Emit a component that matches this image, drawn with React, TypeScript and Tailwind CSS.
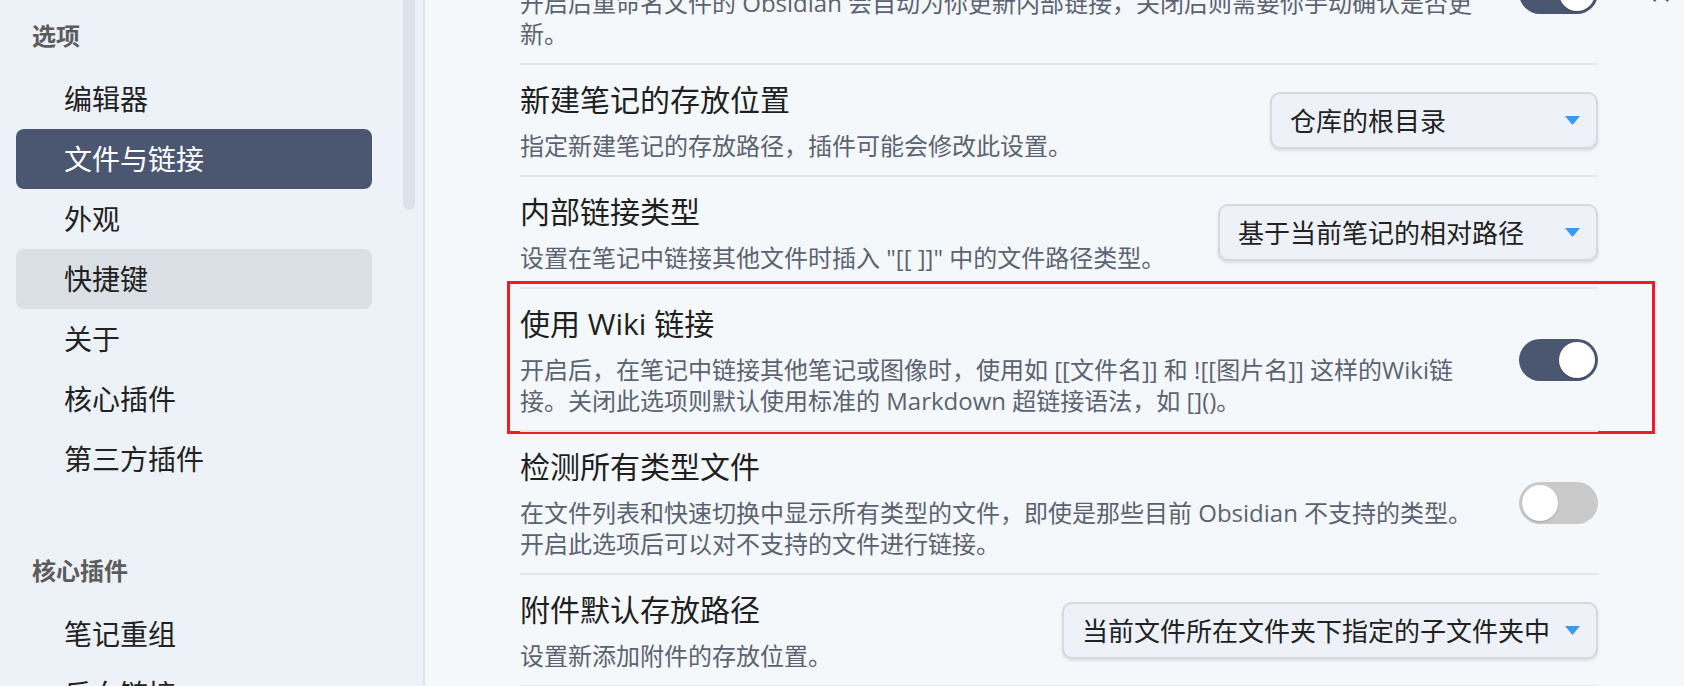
import React from "react";
import { X } from "lucide-react";

const font = {
  fontFamily: '"Open Sans", "Noto Sans CJK SC", sans-serif',
};

const optionItems = [
  { label: "编辑器" },
  { label: "文件与链接", active: true },
  { label: "外观" },
  { label: "快捷键", hover: true },
  { label: "关于" },
  { label: "核心插件" },
  { label: "第三方插件" },
];

const pluginItems = [{ label: "笔记重组" }, { label: "反向链接" }];

function NavGroup({
  heading,
  items,
  className,
}: {
  heading: string;
  items: { label: string; active?: boolean; hover?: boolean }[];
  className?: string;
}) {
  return (
    <div className={className}>
      <div className="pl-[32px] text-[24px] leading-8 font-bold text-[#5c5c5c]">
        {heading}
      </div>
      <div className="mt-[17px] flex flex-col">
        {items.map((item) => (
          <div
            key={item.label}
            className={`ml-[16px] flex h-[60px] w-[356px] items-center rounded-[8px] pl-[48px] text-[28px] ${
              item.active
                ? "bg-[#4b5771] text-white"
                : item.hover
                ? "bg-[#dbdfe6] text-[#222]"
                : "text-[#222]"
            }`}
          >
            {item.label}
          </div>
        ))}
      </div>
    </div>
  );
}

function Toggle({ on }: { on: boolean }) {
  return (
    <div
      className={`flex h-[42px] w-[79px] shrink-0 items-center rounded-full p-[3px] ${
        on ? "justify-end bg-[#4b5771]" : "justify-start bg-[#cacaca]"
      }`}
    >
      <div className="h-[36px] w-[36px] rounded-full bg-white shadow-[0_1px_2px_rgba(0,0,0,0.2)]" />
    </div>
  );
}

function Dropdown({ value, width }: { value: string; width: string }) {
  return (
    <div
      className={`flex h-[57px] shrink-0 items-center justify-between gap-[12px] rounded-[10px] border-2 border-[#d5d9de] bg-[#eef2f8] pl-[18px] pr-[16px] shadow-[0_2px_3px_rgba(0,0,0,0.10)] ${width}`}
    >
      <span className="whitespace-nowrap text-[26px] leading-none text-[#222]">
        {value}
      </span>
      <svg width="15" height="9" viewBox="0 0 15 9" className="shrink-0">
        <path d="M0 0 H15 L7.5 9 Z" fill="#3a9af0" />
      </svg>
    </div>
  );
}

function Row({
  title,
  desc,
  control,
  children,
}: {
  title: string;
  desc: React.ReactNode;
  control: React.ReactNode;
  children?: React.ReactNode;
}) {
  return (
    <div className="relative flex items-center gap-[40px] border-t-2 border-[#e3e6eb] pt-[15px] pb-[14px]">
      <div className="min-w-0 flex-1">
        <div className="text-[30px] leading-[40px] text-[#1f1f1f]">{title}</div>
        <div className="mt-[10px] text-[24px] leading-[31px] text-[#5b6372]">
          {desc}
        </div>
      </div>
      {control}
      {children}
    </div>
  );
}

export default function App() {
  return (
    <div className="flex h-[686px] w-[1684px] overflow-hidden" style={font}>
      <aside className="relative w-[425px] shrink-0 overflow-hidden border-r-2 border-[#dfe3ea] bg-[#edf1f8]">
        <div className="absolute top-0 right-[8px] h-[210px] w-[12px] rounded-b-full bg-[#dde2ea]" />
        <div className="pt-[20px]">
          <NavGroup heading="选项" items={optionItems} />
          <NavGroup heading="核心插件" items={pluginItems} className="mt-[66px]" />
        </div>
      </aside>

      <main className="relative flex-1 overflow-hidden bg-[#f5f8fb]">
        <X
          className="absolute top-[-19px] right-[10px] text-[#555]"
          size={26}
          strokeWidth={2}
        />
        <div className="mt-[-80px] pl-[95px] pr-[86px]">
          <Row
            title="始终更新内部链接"
            desc={
              <>
                开启后重命名文件的 Obsidian 会自动为你更新内部链接，关闭后则需要你手动确认是否更
                <br />
                新。
              </>
            }
            control={<Toggle on />}
          />
          <Row
            title="新建笔记的存放位置"
            desc="指定新建笔记的存放路径，插件可能会修改此设置。"
            control={<Dropdown value="仓库的根目录" width="w-[328px]" />}
          />
          <Row
            title="内部链接类型"
            desc={'设置在笔记中链接其他文件时插入 "[[ ]]" 中的文件路径类型。'}
            control={<Dropdown value="基于当前笔记的相对路径" width="w-[380px]" />}
          />
          <Row
            title="使用 Wiki 链接"
            desc={
              <>
                开启后，在笔记中链接其他笔记或图像时，使用如 [[文件名]] 和 ![[图片名]] 这样的Wiki链
                <br />
                接。关闭此选项则默认使用标准的 Markdown 超链接语法，如 []()。
              </>
            }
            control={<Toggle on />}
          >
            <div className="pointer-events-none absolute top-[-8px] bottom-[-4px] left-[-13px] right-[-57px] border-[3px] border-[#ee1c25]" />
          </Row>
          <Row
            title="检测所有类型文件"
            desc={
              <>
                在文件列表和快速切换中显示所有类型的文件，即使是那些目前 Obsidian 不支持的类型。
                <br />
                开启此选项后可以对不支持的文件进行链接。
              </>
            }
            control={<Toggle on={false} />}
          />
          <Row
            title="附件默认存放路径"
            desc="设置新添加附件的存放位置。"
            control={<Dropdown value="当前文件所在文件夹下指定的子文件夹中" width="w-[536px]" />}
          />
          <Row
            title="附件子文件夹名称"
            desc="附件将存放在此子文件夹中。"
            control={<Toggle on={false} />}
          />
        </div>
      </main>
    </div>
  );
}
